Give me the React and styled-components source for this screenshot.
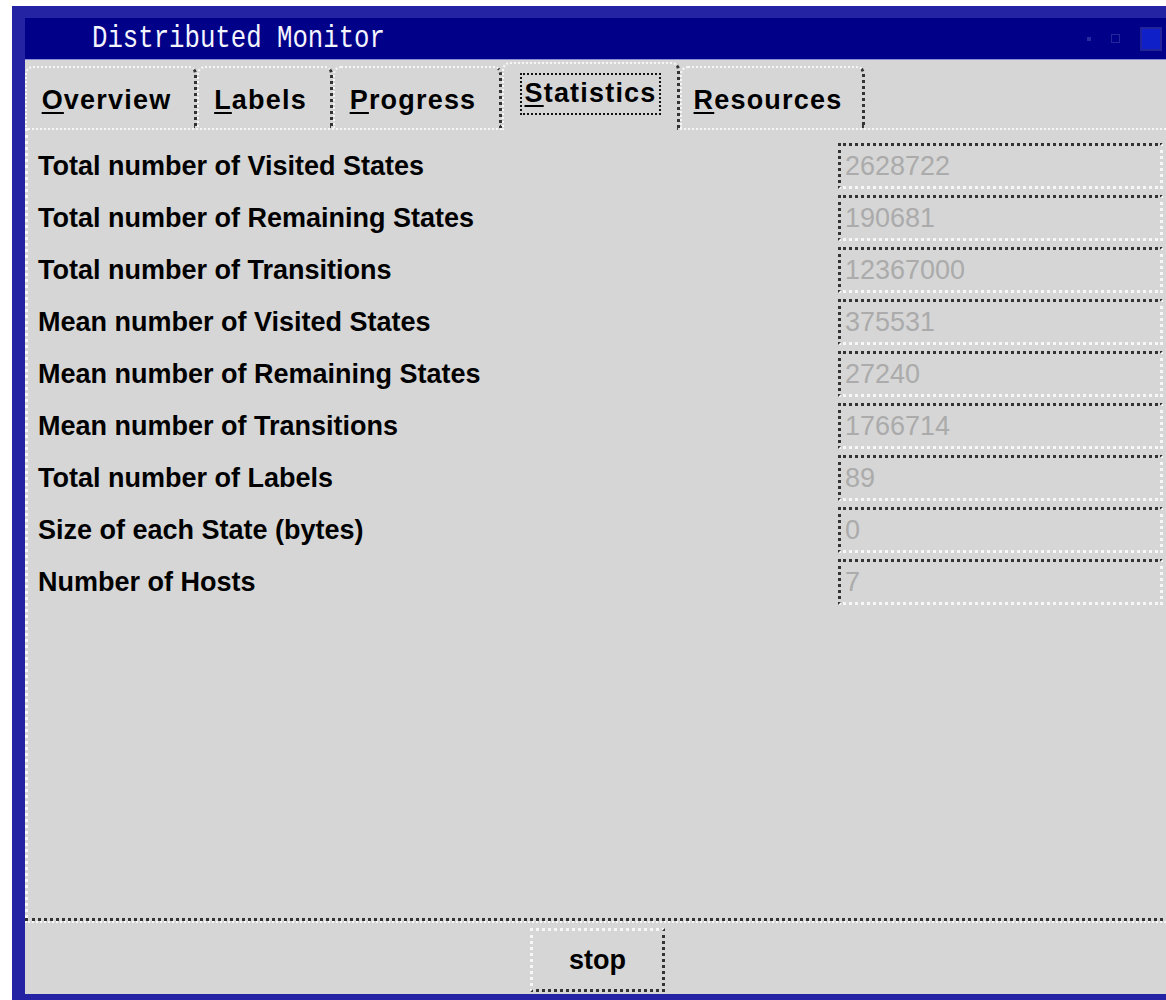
import React from "react";
import styled, { createGlobalStyle } from "styled-components";

const GRAY = "#d6d6d6";
const LIGHT = "#f7f7f7";
const DARK = "#333333";
const FRAME = "#2323a4";
const NAVY = "#000088";

const Global = createGlobalStyle`
  html, body {
    margin: 0;
    padding: 0;
    background: #ffffff;
    overflow: hidden;
  }
  #root {
    width: 1166px;
    height: 1000px;
    overflow: hidden;
  }
`;

const Screen = styled.div`
  box-sizing: border-box;
  height: 1000px;
  padding: 6px 0 0 12px;
`;

const Window = styled.div`
  box-sizing: border-box;
  width: 1171px;
  height: 994px;
  padding: 12px 13px 6px 13px;
  background: ${FRAME};
  display: flex;
  flex-direction: column;
`;

const TitleBar = styled.div`
  box-sizing: border-box;
  height: 42px;
  background: ${NAVY};
  border-bottom: 1px solid #8c8cd6;
  display: flex;
  align-items: center;
  padding: 0 8px 0 67px;
`;

const Title = styled.span`
  font-family: "Liberation Mono", "DejaVu Sans Mono", monospace;
  font-size: 25.7px;
  color: #f4f4ff;
  display: inline-block;
  transform: scaleY(1.25);
  transform-origin: center;
  white-space: pre;
`;

const Controls = styled.div`
  margin-left: auto;
  display: flex;
  align-items: center;
  gap: 20px;
`;

const Dot = styled.span`
  width: 4px;
  height: 4px;
  background: #2a2aa0;
`;

const SmallBox = styled.span`
  width: 7px;
  height: 7px;
  border: 1px solid #25259c;
`;

const BigBox = styled.span`
  box-sizing: border-box;
  width: 22px;
  height: 24px;
  background: #1020c8;
  border: 2px solid #22229a;
`;

const Body = styled.div`
  flex: 1;
  display: flex;
  flex-direction: column;
  background: ${GRAY};
  min-height: 0;
`;

const TabStrip = styled.div`
  height: 68px;
  display: flex;
  align-items: flex-end;
  position: relative;
  z-index: 1;
`;

const Tab = styled.div`
  box-sizing: border-box;
  width: ${(p) => p.$w}px;
  height: ${(p) => (p.$active ? 68 : 62)}px;
  margin-bottom: ${(p) => (p.$active ? -2 : 0)}px;
  padding-top: ${(p) => (p.$active ? 9 : 16)}px;
  padding-right: ${(p) => (p.$active ? 0 : 8)}px;
  background: ${GRAY};
  border-top: 2px dotted ${LIGHT};
  border-left: 2px dotted ${LIGHT};
  border-right: 3px dotted ${DARK};
  border-radius: 8px 8px 0 0;
  display: flex;
  justify-content: center;
  align-items: flex-start;
  font-family: "Liberation Sans", Arial, sans-serif;
  font-weight: 700;
  font-size: 27px;
  line-height: 32px;
  letter-spacing: 1.2px;
  color: #000;
  white-space: nowrap;
`;

const Focus = styled.span`
  border: 2px dotted #111;
  padding: 2px 2px 4px;
`;

const Mnemonic = styled.span`
  text-decoration: underline;
  text-decoration-thickness: 2px;
  text-underline-offset: 3px;
`;

const Page = styled.div`
  flex: 1;
  box-sizing: border-box;
  border-top: 2px dotted ${LIGHT};
  border-left: 3px dotted ${LIGHT};
  padding: 13px 7px 0 10px;
  display: flex;
  flex-direction: column;
  gap: 6px;
`;

const Row = styled.div`
  display: flex;
  align-items: center;
  height: 46px;
`;

const Label = styled.div`
  flex: 1;
  font-family: "Liberation Sans", Arial, sans-serif;
  font-weight: 700;
  font-size: 27px;
  color: #000;
  white-space: nowrap;
`;

const Field = styled.div`
  box-sizing: border-box;
  width: 325px;
  height: 46px;
  border-top: 3px dotted ${DARK};
  border-left: 3px dotted ${DARK};
  border-bottom: 3px dotted ${LIGHT};
  border-right: 3px dotted ${LIGHT};
  padding-left: 4px;
  display: flex;
  align-items: center;
  font-family: "Liberation Sans", Arial, sans-serif;
  font-size: 27px;
  color: #ababab;
`;

const Separator = styled.div`
  height: 0;
  border-top: 3px dotted ${DARK};
  border-bottom: 2px dotted ${LIGHT};
`;

const ButtonBar = styled.div`
  box-sizing: border-box;
  height: 71px;
  padding: 5px 0 2px;
  display: flex;
  justify-content: center;
`;

const Button = styled.button`
  box-sizing: border-box;
  width: 135px;
  height: 64px;
  background: ${GRAY};
  border-top: 3px dotted ${LIGHT};
  border-left: 3px dotted ${LIGHT};
  border-right: 3px dotted ${DARK};
  border-bottom: 3px dotted ${DARK};
  font-family: "Liberation Sans", Arial, sans-serif;
  font-weight: 700;
  font-size: 27px;
  color: #000;
  padding: 0;
  cursor: pointer;
`;

const tabs = [
  { first: "O", rest: "verview", w: 172 },
  { first: "L", rest: "abels", w: 136 },
  { first: "P", rest: "rogress", w: 169 },
  { first: "S", rest: "tatistics", w: 178, active: true },
  { first: "R", rest: "esources", w: 185 },
];

const stats = [
  ["Total number of Visited States", "2628722"],
  ["Total number of Remaining States", "190681"],
  ["Total number of Transitions", "12367000"],
  ["Mean number of Visited States", "375531"],
  ["Mean number of Remaining States", "27240"],
  ["Mean number of Transitions", "1766714"],
  ["Total number of Labels", "89"],
  ["Size of each State (bytes)", "0"],
  ["Number of Hosts", "7"],
];

export default function App() {
  return (
    <>
      <Global />
      <Screen>
        <Window>
          <TitleBar>
            <Title>Distributed Monitor</Title>
            <Controls>
              <Dot />
              <SmallBox />
              <BigBox />
            </Controls>
          </TitleBar>
          <Body>
            <TabStrip>
              {tabs.map((t) => {
                const text = (
                  <span>
                    <Mnemonic>{t.first}</Mnemonic>
                    {t.rest}
                  </span>
                );
                return (
                  <Tab key={t.rest} $w={t.w} $active={t.active}>
                    {t.active ? <Focus>{text}</Focus> : text}
                  </Tab>
                );
              })}
            </TabStrip>
            <Page>
              {stats.map(([label, value]) => (
                <Row key={label}>
                  <Label>{label}</Label>
                  <Field>{value}</Field>
                </Row>
              ))}
            </Page>
            <Separator />
            <ButtonBar>
              <Button>stop</Button>
            </ButtonBar>
          </Body>
        </Window>
      </Screen>
    </>
  );
}
